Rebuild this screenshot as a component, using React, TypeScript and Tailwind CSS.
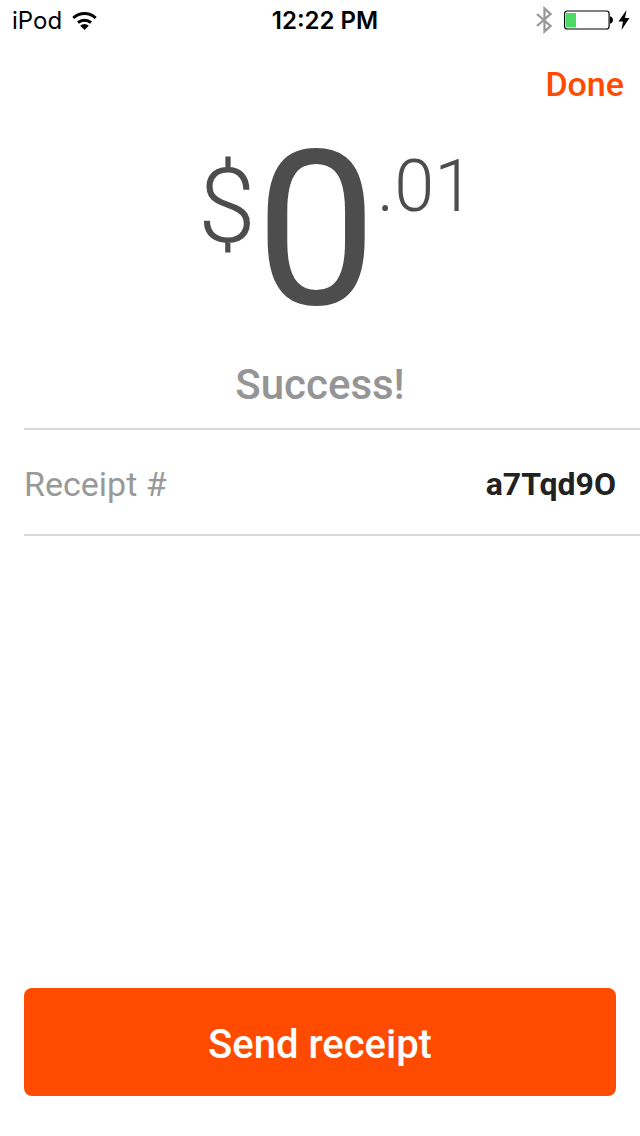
export default function App() {
  return (
    <div className="flex min-h-screen flex-col bg-white font-['Roboto',sans-serif]">
      <div className="grid h-10 grid-cols-3 items-center pt-0.5 pr-2.5 pl-3 font-['Inter',sans-serif] text-2xl text-black">
        <div className="flex items-center gap-2.5">
          <span>iPod</span>
          <svg className="h-[18px] w-[25px]" viewBox="0 0 25 18" aria-label="Wi-Fi">
            <path d="M1.300 6a16.400 16.400 0 0 1 22.400 0M6 10.700a10 10 0 0 1 13 0" fill="none" stroke="black" strokeWidth="3" />
            <path d="M12.500 18l-4.300-4.300a6.500 6.500 0 0 1 8.600 0z" />
          </svg>
        </div>
        <div className="pl-2 text-center font-semibold whitespace-nowrap">12:22 PM</div>
        <div className="flex items-center justify-end gap-1 pb-0.5">
          <svg className="mr-2 h-[28px] w-4" viewBox="0 0 16 28" fill="none" stroke="#999" strokeWidth="2.300" aria-label="Bluetooth">
            <path d="M1 8l13.500 12-6 5.500V2.500l6 5.500L1 20" />
          </svg>
          <svg className="h-5 w-[50px]" viewBox="0 0 50 20" aria-label="Battery">
            <rect x="0.600" y="1" width="44.500" height="18" rx="2.500" fill="none" stroke="black" strokeWidth="1.200" />
            <rect x="2" y="3" width="10" height="14.500" fill="#4cd964" />
            <path d="M46 6.500h1q2 1 2 3.500t-2 3.500h-1z" />
          </svg>
          <svg className="h-5 w-3" viewBox="0 0 12 20" aria-label="Charging">
            <path d="M8.500 0L0.500 11.500h4.500L3.500 20l8-12H7z" />
          </svg>
        </div>
      </div>
      <header className="flex h-[88px] items-center justify-end px-4">
        <button type="button" className="text-[34px] font-medium text-[#ff4b00]">Done</button>
      </header>
      <main className="pt-[23px]">
        <div className="flex items-start justify-center pl-8 text-[#4d4d4d]">
          <span className="pt-1 text-[104px] leading-none font-light">$</span>
          <span className="text-[216px] leading-[160px]">0</span>
          <span className="text-[72px] leading-none font-light">.01</span>
        </div>
        <h1 className="mt-[53px] mb-[22px] text-center text-[42px] leading-none font-medium text-[#959595]">Success!</h1>
        <dl className="ml-6 flex items-center justify-between border-y-2 border-[#d8d8d8] pt-8 pr-6 pb-7 leading-[44px]">
          <dt className="text-[34px] text-[#999]">Receipt #</dt>
          <dd className="text-[32px] font-bold text-[#222]">a7Tqd9O</dd>
        </dl>
      </main>
      <footer className="mt-auto px-6 pb-10">
        <button type="button" className="h-[108px] w-full rounded-lg bg-[#ff4b00] pt-1.5 text-[40px] font-medium text-white">Send receipt</button>
      </footer>
    </div>
  );
}
